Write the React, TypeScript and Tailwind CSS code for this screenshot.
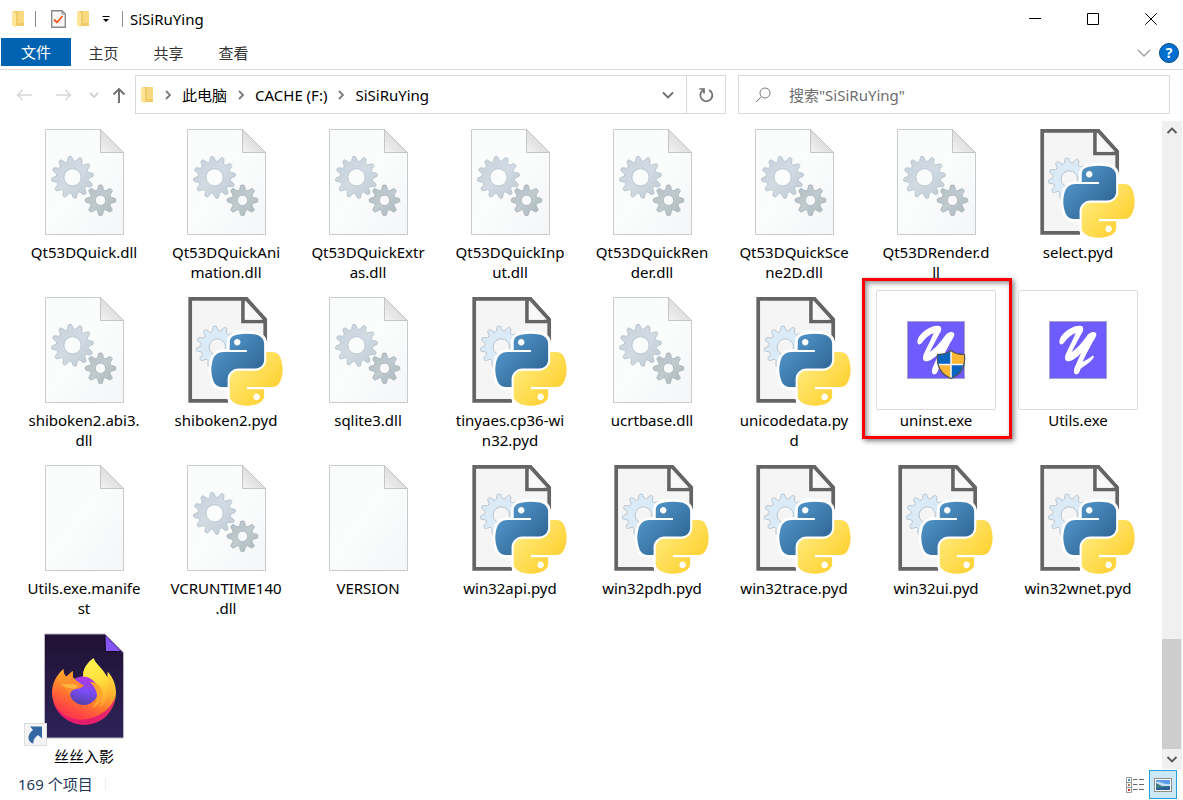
import { Fragment, useId } from 'react';

type Kind = 'dll' | 'pyd' | 'blank' | 'app' | 'uninstall' | 'firefox';

interface FileItem {
  name: string;
  kind: Kind;
  highlighted?: boolean;
}

// "\n" marks where a long name wraps under its icon
const files: FileItem[] = [
  { name: 'Qt53DQuick.dll', kind: 'dll' },
  { name: 'Qt53DQuickAni\nmation.dll', kind: 'dll' },
  { name: 'Qt53DQuickExtr\nas.dll', kind: 'dll' },
  { name: 'Qt53DQuickInp\nut.dll', kind: 'dll' },
  { name: 'Qt53DQuickRen\nder.dll', kind: 'dll' },
  { name: 'Qt53DQuickSce\nne2D.dll', kind: 'dll' },
  { name: 'Qt53DRender.d\nll', kind: 'dll' },
  { name: 'select.pyd', kind: 'pyd' },
  { name: 'shiboken2.abi3.\ndll', kind: 'dll' },
  { name: 'shiboken2.pyd', kind: 'pyd' },
  { name: 'sqlite3.dll', kind: 'dll' },
  { name: 'tinyaes.cp36-wi\nn32.pyd', kind: 'pyd' },
  { name: 'ucrtbase.dll', kind: 'dll' },
  { name: 'unicodedata.py\nd', kind: 'pyd' },
  { name: 'uninst.exe', kind: 'uninstall', highlighted: true },
  { name: 'Utils.exe', kind: 'app' },
  { name: 'Utils.exe.manife\nst', kind: 'blank' },
  { name: 'VCRUNTIME140\n.dll', kind: 'dll' },
  { name: 'VERSION', kind: 'blank' },
  { name: 'win32api.pyd', kind: 'pyd' },
  { name: 'win32pdh.pyd', kind: 'pyd' },
  { name: 'win32trace.pyd', kind: 'pyd' },
  { name: 'win32ui.pyd', kind: 'pyd' },
  { name: 'win32wnet.pyd', kind: 'pyd' },
  { name: '丝丝入影', kind: 'firefox' },
];

const tabs = ['主页', '共享', '查看'];
const crumbs = ['此电脑', 'CACHE (F:)', 'SiSiRuYing'];

// Outline of a toothed wheel with a round hole
function gearPath(cx: number, cy: number, outer: number, inner: number, hole: number, teeth: number, start: number) {
  const step = (Math.PI * 2) / teeth;
  const point = (r: number, a: number) => `${(cx + r * Math.cos(a)).toFixed(2)} ${(cy + r * Math.sin(a)).toFixed(2)}`;
  const parts: string[] = [];
  for (let i = 0; i < teeth; i++) {
    const a = (start * Math.PI) / 180 + i * step;
    parts.push(`${i === 0 ? 'M' : 'L'}${point(inner, a - step * 0.34)}`);
    parts.push(`L${point(outer - 1, a - step * 0.18)}`);
    parts.push(`Q${point(outer + 0.6, a - step * 0.12)} ${point(outer, a)}`);
    parts.push(`Q${point(outer + 0.6, a + step * 0.12)} ${point(outer - 1, a + step * 0.18)}`);
    parts.push(`L${point(inner, a + step * 0.34)}`);
    parts.push(`Q${point(inner - 0.8, a + step * 0.5)} ${point(inner, a + step * 0.66)}`);
  }
  return `${parts.join('')}Z M${cx - hole} ${cy}a${hole} ${hole} 0 1 0 ${hole * 2} 0a${hole} ${hole} 0 1 0 ${-hole * 2} 0Z`;
}

const bigGear = gearPath(48.5, 55.3, 21, 16.6, 8.6, 12, -97);
const smallGear = gearPath(76.5, 78.3, 15.3, 11, 5.2, 8, -90);
const pythonGear = gearPath(51.3, 57, 21, 16.6, 8.2, 12, -97);

const pythonBlue =
  'M54.92 0C50.34.02 45.96.41 42.11 1.09 30.76 3.1 28.7 7.29 28.7 15.03V25.25H55.51V28.66H18.64C10.85 28.66 4.02 33.34 1.89 42.25-.57 52.46-.68 58.84 1.89 69.5 3.79 77.44 8.35 83.09 16.14 83.09H25.36V70.84C25.36 61.99 33.01 54.19 42.11 54.19H68.89C76.34 54.19 82.29 48.05 82.29 40.56V15.03C82.29 7.77 76.16 2.31 68.89 1.09 64.28.33 59.5-.02 54.92 0ZM40.42 8.22C43.19 8.22 45.45 10.52 45.45 13.34 45.45 16.16 43.19 18.44 40.42 18.44 37.64 18.44 35.39 16.16 35.39 13.34 35.39 10.52 37.64 8.22 40.42 8.22Z';
const pythonYellow =
  'M85.64 28.66V40.56C85.64 49.79 77.81 57.56 68.89 57.56H42.11C34.77 57.56 28.7 63.84 28.7 71.19V96.72C28.7 103.99 35.02 108.26 42.11 110.34 50.59 112.84 58.73 113.29 68.89 110.34 75.64 108.39 82.29 104.46 82.29 96.72V86.5H55.51V83.09H95.7C103.49 83.09 106.4 77.66 109.11 69.5 111.91 61.1 111.85 53.03 109.11 42.25 107.18 34.49 103.5 28.66 95.7 28.66ZM70.58 93.31C73.35 93.31 75.61 95.59 75.61 98.41 75.61 101.23 73.35 103.53 70.58 103.53 67.81 103.53 65.54 101.23 65.54 98.41 65.54 95.59 67.81 93.31 70.58 93.31Z';

function PageIcon({ gears }: { gears: boolean }) {
  const id = useId();
  return (
    <svg viewBox="0 0 120 120" className="size-[120px]" aria-hidden="true">
      <defs>
        <linearGradient id={`${id}page`} x1="0" y1="0" x2="1" y2="1">
          <stop offset="0" stopColor="#fafbfb" />
          <stop offset="0.5" stopColor="#fbfcfc" />
          <stop offset="1" stopColor="#f3f5f7" />
        </linearGradient>
        <linearGradient id={`${id}fold`} x1="0" y1="1" x2="1" y2="0">
          <stop offset="0" stopColor="#f4f4f4" />
          <stop offset="0.5" stopColor="#dedede" />
          <stop offset="1" stopColor="#f0f0f0" />
        </linearGradient>
        <linearGradient id={`${id}big`} x1="0" y1="0" x2="1" y2="1">
          <stop offset="0" stopColor="#c6d0d9" />
          <stop offset="0.5" stopColor="#d2dbe4" />
          <stop offset="1" stopColor="#bec9d2" />
        </linearGradient>
        <linearGradient id={`${id}small`} x1="0" y1="0" x2="1" y2="1">
          <stop offset="0" stopColor="#b4bec3" />
          <stop offset="0.5" stopColor="#c0cacf" />
          <stop offset="1" stopColor="#aab5ba" />
        </linearGradient>
      </defs>
      <path d="M21.5 7.5H76.5L99.5 30.5V112.5H21.5Z" fill={`url(#${id}page)`} stroke="#c8cacb" />
      <path d="M76.5 7.5V30.5H99.5Z" fill={`url(#${id}fold)`} stroke="#c2c4c5" />
      {gears && (
        <g fillRule="evenodd" strokeWidth="0.8">
          <path d={bigGear} fill={`url(#${id}big)`} stroke="#b3bfc8" />
          <path d={smallGear} fill={`url(#${id}small)`} stroke="#a3afb5" />
        </g>
      )}
    </svg>
  );
}

function PythonIcon() {
  const id = useId();
  return (
    <svg viewBox="0 0 120 120" className="size-[120px]" aria-hidden="true">
      <defs>
        <linearGradient id={`${id}blue`} x1="0" y1="0" x2="0.8" y2="0.8">
          <stop offset="0" stopColor="#5a9fd4" />
          <stop offset="1" stopColor="#306998" />
        </linearGradient>
        <linearGradient id={`${id}yellow`} x1="0.2" y1="0.2" x2="0.75" y2="0.7">
          <stop offset="0" stopColor="#ffe873" />
          <stop offset="1" stopColor="#ffd43b" />
        </linearGradient>
      </defs>
      <path d="M24 9H80L99 29V52L92 112H24Z" fill="#f5f5f5" />
      <path d={pythonGear} fill="#daeaf7" fillRule="evenodd" stroke="#b4c0ca" strokeWidth="0.9" />
      <path d="M99.2 53V29.5L80.5 8.9H24.2V110.9H62M77 9V31.5H99" fill="none" stroke="#646464" strokeWidth="3.7" />
      <path d="M78.8 12.5V29.8H94.5Z" fill="#f8f8f8" />
      <path d="M66 78H101V114H66Z" fill="#fff" />
      <g transform="translate(45.3 43.7) scale(0.642)">
        <g fill="#fff" stroke="#fff" strokeWidth="9" strokeLinejoin="round">
          <path d={pythonBlue} />
          <path d={pythonYellow} />
        </g>
        <path d="M28 20H83V88H28Z" fill="#fff" />
        <path d={pythonBlue} fill={`url(#${id}blue)`} fillRule="evenodd" />
        <path d={pythonYellow} fill={`url(#${id}yellow)`} fillRule="evenodd" />
      </g>
    </svg>
  );
}

function AppIcon({ shield }: { shield: boolean }) {
  return (
    <svg viewBox="0 0 120 120" className="size-[120px]" aria-hidden="true">
      <rect x="0.5" y="0.5" width="119" height="119" rx="1.5" fill="#fff" stroke="#dcdcdc" />
      <rect x="31.5" y="31.5" width="57" height="57" fill="#6e5cff" stroke="#a9a4c9" />
      <g transform="translate(26 26) scale(0.33333)" fill="#fff">
        <path d="M47 82C43 70 55 54 70 43C82 34 97 28 109 29C120 30 120 42 113 52L83 108C100 98 116 78 130 58C137 47 153 44 157 53C158 61 149 72 143 84C132 104 121 124 116 138C126 133 136 127 143 121C148 117 152 120 148 127C137 142 121 150 110 158C107 168 103 176 97 175C89 174 88 164 93 152L111 112C99 124 86 135 73 136C61 135 61 124 66 113C75 93 87 72 95 51C82 56 70 66 61 79C56 86 49 88 47 82Z" />
      </g>
      {shield && (
        <g>
          <path d="M75 60.5C79 64 84 64.500 88.500 64.500C89.500 75 86 84 75 88.500C64 84 60.500 75 61.500 64.500C66 64.500 71 64 75 60.500Z" fill="#fdb735" />
          <path d="M75 60.5C71 64 66 64.500 61.500 64.500C61.200 68.500 61.500 71.500 62.500 74.500H75ZM75 74.500H87.500C85.500 81 82 85.500 75 88.500Z" fill="#0a66c0" />
          <path d="M75 61V88M62 74.500H88" stroke="#f4f4f4" strokeWidth="1.6" />
          <path d="M75 60.5C79 64 84 64.500 88.500 64.500C89.500 75 86 84 75 88.500C64 84 60.500 75 61.500 64.500C66 64.500 71 64 75 60.500Z" fill="none" stroke="#4e5358" strokeWidth="1.2" />
        </g>
      )}
    </svg>
  );
}

function FirefoxIcon() {
  return (
    <svg viewBox="0 0 120 120" className="size-[120px]" aria-hidden="true">
      <defs>
        <linearGradient id="fxPage" x1="0" y1="0" x2="0" y2="1">
          <stop offset="0" stopColor="#201133" />
          <stop offset="1" stopColor="#2d2359" />
        </linearGradient>
        <linearGradient id="fxBody" x1="0.8" y1="0.1" x2="0.4" y2="1">
          <stop offset="0" stopColor="#ffe847" />
          <stop offset="0.35" stopColor="#ffb42e" />
          <stop offset="0.6" stopColor="#ff7a2e" />
          <stop offset="0.85" stopColor="#ff4545" />
          <stop offset="1" stopColor="#fb3052" />
        </linearGradient>
        <linearGradient id="fxTail" x1="0.4" y1="0" x2="0.6" y2="1">
          <stop offset="0" stopColor="#fff44f" />
          <stop offset="0.5" stopColor="#ffdc3c" />
          <stop offset="1" stopColor="#ff9a2e" />
        </linearGradient>
        <linearGradient id="fxHead" x1="0" y1="0" x2="0.5" y2="1">
          <stop offset="0" stopColor="#ffa02a" />
          <stop offset="1" stopColor="#ff8130" />
        </linearGradient>
        <linearGradient id="fxGlobe" x1="0.6" y1="0" x2="0.4" y2="1">
          <stop offset="0" stopColor="#b833e1" />
          <stop offset="0.5" stopColor="#7a4df5" />
          <stop offset="1" stopColor="#5340a8" />
        </linearGradient>
      </defs>
      <path d="M20.5 8H81L99.5 26.5V112H20.5Z" fill="url(#fxPage)" stroke="#b9b5c2" />
      <path d="M81 9L99 27C96 25.5 91 25 82 25Z" fill="#8554f2" />
      <path d="M81 9V25.5H98" fill="none" stroke="#150b26" strokeWidth="1" />
      <g transform="translate(16 24) scale(0.33333)">
        <path d="M36 130C36 102 46 80 70 57C70 69 73 76 79 80L98 63C98 73 98 81 101 86L130 82C126 62 141 38 161 25C165 42 188 53 202 82L203 65C219 81 228 105 228 128C226 181 187 224 132 224C80 224 38 181 36 130Z" fill="url(#fxBody)" />
        <path d="M38 148C56 210 130 226 186 190C206 177 219 160 226 140C220 189 183 224 132 224C84 224 46 191 38 148Z" fill="#e21773" opacity="0.85" />
        <circle cx="131" cy="122" r="43" fill="url(#fxGlobe)" />
        <path d="M130 80C127 60 141 38 161 25C165 44 203 66 206 102C210 134 198 160 176 176C190 152 186 122 170 102C158 88 146 80 130 80Z" fill="url(#fxTail)" />
        <path d="M150 96C163 96 178 103 185 119C195 145 178 168 154 175C170 160 175 141 169 126C165 111 158 105 150 96Z" fill="#ffa52f" />
        <path d="M70 57C70 69 73 76 79 80L98 63C98 73 98 81 101 86C109 91 119 99 131 106C127 114 116 116 105 118C94 121 89 129 90 139C84 134 80 119 64 103C58 94 62 75 70 57Z" fill="url(#fxHead)" />
        <path d="M62 103C79 104 94 99 112 106C114 110 109 113 104 116C84 116 72 112 62 103Z" fill="#ffb640" />
      </g>
      <rect x="0.5" y="97.5" width="22" height="22" fill="#f4f4f4" stroke="#dedede" />
      <path d="M6 100.5H18V112.5L14 109C10.5 112 9 114 9.5 117.5C7 117.5 4 114.5 4.5 111C5 107.5 7 105.5 9 104Z" fill="#3567a2" />
    </svg>
  );
}

function FileIcon({ kind }: { kind: Kind }) {
  switch (kind) {
    case 'pyd':
      return <PythonIcon />;
    case 'app':
    case 'uninstall':
      return <AppIcon shield={kind === 'uninstall'} />;
    case 'firefox':
      return <FirefoxIcon />;
    default:
      return <PageIcon gears={kind === 'dll'} />;
  }
}

function FolderIcon() {
  return (
    <svg viewBox="0 0 14 18" className="h-[18px] w-3.5 shrink-0" aria-hidden="true">
      <path d="M3 1H13V16H3Z" fill="#f2cb69" />
      <path d="M7 1H13V13H7Z" fill="#f8d97f" />
      <path d="M1 1L5 3V17.5L1 15.5Z" fill="#fde59a" />
    </svg>
  );
}

function Chevron({ d, className }: { d: string; className: string }) {
  return (
    <svg viewBox="0 0 12 12" className={`size-3 shrink-0 ${className}`} aria-hidden="true">
      <path d={d} fill="none" stroke="currentColor" strokeWidth="1.8" />
    </svg>
  );
}

function TitleBar() {
  return (
    <header className="flex h-[38px] items-center pl-[11px] text-black">
      <FolderIcon />
      <span className="ml-[10px] h-4 w-px bg-[#8c8c8c]" />
      <button type="button" aria-label="属性" className="ml-[15px]">
        <svg viewBox="0 0 15 18" className="h-[18px] w-[15px]" aria-hidden="true">
          <path d="M0.7 0.7H11L14.3 4V17.3H0.7Z" fill="#f7f7f7" stroke="#8b8b8b" strokeWidth="1.4" />
          <path d="M11 0.7V4H14.3" fill="none" stroke="#8b8b8b" />
          <path d="M3 9.5L6 12.5L11.5 6" fill="none" stroke="#f0561d" strokeWidth="1.8" />
        </svg>
      </button>
      <button type="button" aria-label="新建文件夹" className="ml-[10px]">
        <FolderIcon />
      </button>
      <button type="button" aria-label="自定义快速访问工具栏" className="ml-3">
        <svg viewBox="0 0 8 8" className="size-2" aria-hidden="true">
          <path d="M0.5 1.5H7.5" stroke="#000" />
          <path d="M1 4H7L4 7Z" />
        </svg>
      </button>
      <span className="ml-3 h-4 w-px bg-[#8c8c8c]" />
      <h1 className="ml-[7px]">SiSiRuYing</h1>
      <div className="ml-auto flex pr-[3px]">
        <button type="button" aria-label="最小化" className="flex h-9 w-[58px] items-center justify-center">
          <svg viewBox="0 0 12 12" className="size-3" aria-hidden="true">
            <path d="M0 5.5H12" stroke="#000" />
          </svg>
        </button>
        <button type="button" aria-label="最大化" className="flex h-9 w-[58px] items-center justify-center">
          <svg viewBox="0 0 12 12" className="size-3" aria-hidden="true">
            <path d="M0.5 0.5H11.5V11.5H0.5Z" fill="none" stroke="#000" />
          </svg>
        </button>
        <button type="button" aria-label="关闭" className="flex h-9 w-[58px] items-center justify-center">
          <svg viewBox="0 0 12 12" className="size-3" aria-hidden="true">
            <path d="M0.3 0.3L11.7 11.7M11.7 0.3L0.3 11.7" stroke="#000" />
          </svg>
        </button>
      </div>
    </header>
  );
}

function Ribbon() {
  return (
    <nav className="flex h-8 border-b border-[#dadbdc] pl-px text-[#333]">
      <button type="button" className="h-7 w-[70px] bg-[#0063b1] text-white">
        文件
      </button>
      {tabs.map((tab) => (
        <button key={tab} type="button" className="h-[30px] w-[65px]">
          {tab}
        </button>
      ))}
      <div className="ml-auto flex h-[30px] items-center gap-2 pr-1">
        <button type="button" aria-label="展开功能区">
          <svg viewBox="0 0 14 8" className="h-2 w-3.5" aria-hidden="true">
            <path d="M1 1L7 7L13 1" fill="none" stroke="#9d9d9d" strokeWidth="1.3" />
          </svg>
        </button>
        <button type="button" className="size-5 rounded-full border border-[#004a8c] bg-[#006fd0] text-sm leading-[18px] font-bold text-white">
          ?
        </button>
      </div>
    </nav>
  );
}

function AddressRow() {
  return (
    <div className="flex h-[51px] items-center pr-[13px] pb-0.5 pl-4 text-black">
      <button type="button" aria-label="后退">
        <svg viewBox="0 0 16 12" className="h-3 w-4" aria-hidden="true">
          <path d="M16 6H1.5M6.5 1L1.5 6L6.5 11" fill="none" stroke="#d8d8d8" strokeWidth="1.5" />
        </svg>
      </button>
      <button type="button" aria-label="前进" className="ml-6">
        <svg viewBox="0 0 16 12" className="h-3 w-4" aria-hidden="true">
          <path d="M0 6H14.5M9.5 1L14.5 6L9.5 11" fill="none" stroke="#d8d8d8" strokeWidth="1.5" />
        </svg>
      </button>
      <button type="button" aria-label="最近浏览的位置" className="ml-4 text-[#d0d0d0]">
        <Chevron d="M2 4L6 8L10 4" className="" />
      </button>
      <button type="button" aria-label="上移" className="ml-3">
        <svg viewBox="0 0 14 16" className="h-4 w-3.5" aria-hidden="true">
          <path d="M7 16V2M1.5 7.5L7 2L12.5 7.5" fill="none" stroke="#6e6e6e" strokeWidth="1.9" />
        </svg>
      </button>
      <div className="ml-[9px] flex h-[39px] flex-1 items-center border border-[#d9d9d9]">
        <div className="flex min-w-0 flex-1 items-center pl-1">
          <FolderIcon />
          {crumbs.map((crumb) => (
            <Fragment key={crumb}>
              <Chevron d="M4 2L8 6L4 10" className="mx-2 text-[#7a7a7a]" />
              <button type="button">{crumb}</button>
            </Fragment>
          ))}
        </div>
        <button type="button" aria-label="以前的位置" className="flex w-9 items-center justify-center text-[#6c6c6c]">
          <Chevron d="M1 3.5L6 8.5L11 3.5" className="" />
        </button>
        <button type="button" aria-label="刷新" className="flex h-full w-[39px] items-center justify-center border-l border-[#d9d9d9]">
          <svg viewBox="0 0 16 16" className="size-4" aria-hidden="true">
            <path d="M11 2.9A6 6 0 1 1 5 3.3M1.5 2H6V6.500" fill="none" stroke="#6e6e6e" strokeWidth="1.7" />
          </svg>
        </button>
      </div>
      <label className="ml-3 flex h-[39px] w-[432px] items-center border border-[#d9d9d9] pl-4">
        <svg viewBox="0 0 16 16" className="size-4" aria-hidden="true">
          <circle cx="10" cy="6" r="5" fill="none" stroke="#7a7a7a" />
          <path d="M6.5 9.5L1 15" stroke="#7a7a7a" />
        </svg>
        <input
          type="text"
          aria-label="搜索"
          placeholder={'搜索"SiSiRuYing"'}
          className="ml-[18px] min-w-0 flex-1 bg-transparent outline-none placeholder:text-[#6d6d6d]"
        />
      </label>
    </div>
  );
}

function FileTile({ file }: { file: FileItem }) {
  return (
    <li className="relative">
      <button type="button" className="flex w-full flex-col items-center">
        <FileIcon kind={file.kind} />
        <span className="leading-5 whitespace-pre">{file.name}</span>
      </button>
      {file.highlighted && (
        <span className="absolute -top-3 -right-[5px] bottom-[11px] -left-[3px] border-[3px] border-[#fb0000] shadow-[2px_2px_5px_rgba(0,0,0,0.5),inset_2px_2px_5px_rgba(0,0,0,0.45)]" />
      )}
    </li>
  );
}

function ScrollBar() {
  return (
    <div className="flex w-5 flex-col bg-[#f0f0f0] text-[#555]">
      <button type="button" aria-label="向上滚动" className="flex h-5 items-center justify-center">
        <Chevron d="M1.5 8L6 3.5L10.5 8" className="" />
      </button>
      <div className="flex flex-1 flex-col justify-end pr-px">
        <div className="h-[110px] bg-[#cdcdcd]" />
      </div>
      <button type="button" aria-label="向下滚动" className="flex h-5 items-center justify-center">
        <Chevron d="M1.5 4L6 8.5L10.5 4" className="" />
      </button>
    </div>
  );
}

function StatusBar() {
  return (
    <footer className="flex h-[31px] items-start pr-1.5 pl-[18px] text-[#1e395b]">
      <div className="flex h-[29px] items-center">
        <span>169 个项目</span>
        <span className="ml-3 h-3 w-px bg-[#ececec]" />
      </div>
      <div className="ml-auto flex items-center pt-px">
        <button type="button" aria-label="详细信息">
          <svg viewBox="0 0 18 16" className="h-4 w-[18px]" aria-hidden="true">
            <path d="M0.5 0.5H5.5V15.5H0.5ZM0.5 5.5H5.5M0.5 10.5H5.5" fill="#fff" stroke="#9a9a9a" />
            <path d="M2 2H4V4H2Z" fill="#4a90c8" />
            <path d="M2 7H4V9H2Z" fill="#a87a5c" />
            <path d="M2 12H4V14H2Z" fill="#d03020" />
            <path d="M7 2.5H11.5M13 2.5H18M7 7.5H11.5M13 7.5H18M7 12.5H11.5M13 12.5H18" stroke="#6a6a6a" />
          </svg>
        </button>
        <button type="button" aria-label="大图标" className="ml-[5px] flex h-[29px] w-7 items-center justify-center border border-[#26a0da] bg-[#cbe8f6]">
          <svg viewBox="0 0 18 14" className="h-3.5 w-[18px]" aria-hidden="true">
            <rect x="0.5" y="0.5" width="17" height="13" fill="#fff" stroke="#8e8e8e" />
            <path d="M2 2H16V7H2Z" fill="#5b9be8" />
            <path d="M2 4C6 3 10 7 16 6V8H2Z" fill="#c9def4" />
            <path d="M2 5L8 8H16V12H2Z" fill="#3e7f83" />
            <path d="M2 10L16 8.5V12H2Z" fill="#2c5f9b" />
          </svg>
        </button>
      </div>
    </footer>
  );
}

export default function App() {
  return (
    <div className="flex h-screen flex-col overflow-hidden bg-white font-['Noto_Sans','Noto_Sans_CJK_SC',sans-serif] text-[15px] leading-5">
      <TitleBar />
      <Ribbon />
      <AddressRow />
      <main className="flex min-h-0 flex-1">
        <ul className="grid flex-1 auto-rows-min grid-cols-[repeat(auto-fill,142px)] gap-y-2 overflow-hidden pt-px pl-[13px] text-black">
          {files.map((file) => (
            <FileTile key={file.name} file={file} />
          ))}
        </ul>
        <ScrollBar />
        <div className="w-px" />
      </main>
      <StatusBar />
    </div>
  );
}
